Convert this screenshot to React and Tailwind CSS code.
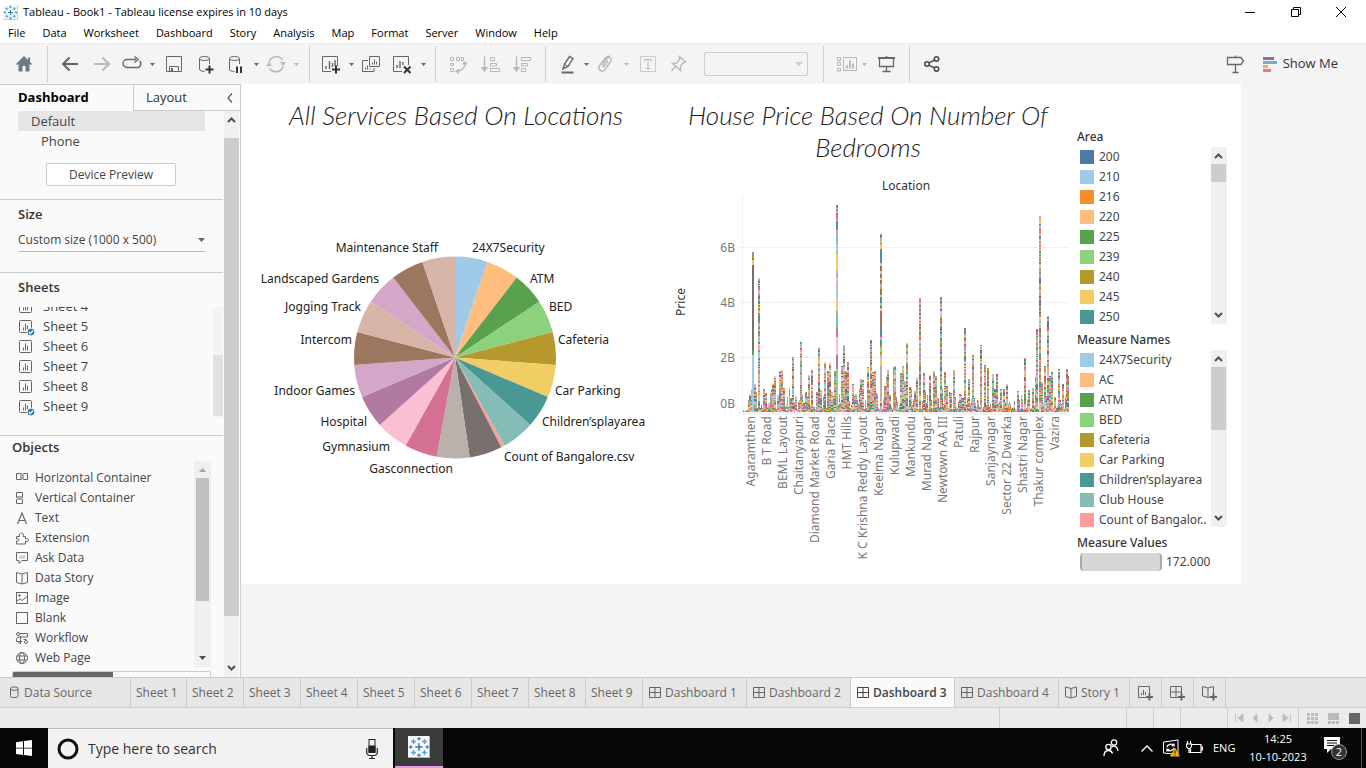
import React from "react";

const PALETTE = [
  "#4e79a7", "#a0cbe8", "#f28e2b", "#ffbe7d", "#59a14f", "#8cd17d", "#b6992d", "#f1ce63", "#499894", "#86bcb6",
  "#e15759", "#ff9d9a", "#79706e", "#bab0ac", "#d37295", "#fabfd2", "#b07aa1", "#d4a6c8", "#9d7660", "#d7b5a6",
];

/* ---------- icons ---------- */

function Ic({ children, size = 24, className = "text-[#666]", sw = 1 }) {
  return (
    <svg width={size} height={size} viewBox={`0 0 ${size} ${size}`} fill="none" stroke="currentColor" strokeWidth={sw} className={`shrink-0 ${className}`} aria-hidden="true">
      {children}
    </svg>
  );
}

function TableauMark({ size = 16, className = "" }) {
  const cross = (x, y, r, w, c) => <path key={`${x}-${y}`} d={`M${x - r} ${y}h${2 * r}M${x} ${y - r}v${2 * r}`} stroke={c} strokeWidth={w} />;
  return (
    <svg width={size} height={size} viewBox="0 0 24 24" fill="none" className={`shrink-0 ${className}`} aria-hidden="true">
      <rect x="0" y="0" width="24" height="24" fill="#f7f7f7" />
      <path d="M23.5 0v23.5H0" stroke="#aaa" />
      {cross(12, 12, 4, 1.6, "#2b7bab")}
      {cross(12, 3, 2, 1.4, "#3f8fc0")}
      {cross(12, 21, 2, 1.4, "#3f8fc0")}
      {cross(3, 12, 2, 1.4, "#3f8fc0")}
      {cross(21, 12, 2, 1.4, "#3f8fc0")}
      {cross(6, 6, 2.6, 1.5, "#5b9fca")}
      {cross(18, 6, 2.6, 1.5, "#5b9fca")}
      {cross(6, 18, 2.6, 1.5, "#5b9fca")}
      {cross(18, 18, 2.6, 1.5, "#5b9fca")}
    </svg>
  );
}

const Caret = ({ faint }) => (
  <svg width="5" height="3" viewBox="0 0 5 3" className={faint ? "text-[#b8b8b8]" : "text-[#666]"} aria-hidden="true">
    <path d="M0 0h5L2.5 3z" fill="currentColor" />
  </svg>
);

function Tool({ label, w = "w-8", faint, children }) {
  return (
    <button aria-label={label} className={`flex h-8 shrink-0 items-center justify-center ${w}`}>
      <Ic className={faint ? "text-[#b8b8b8]" : "text-[#666]"}>{children}</Ic>
    </button>
  );
}
function More({ label, faint }) {
  return (
    <button aria-label={label} className="flex h-8 w-3 shrink-0 items-center justify-center">
      <Caret faint={faint} />
    </button>
  );
}
const Divider = ({ className = "" }) => <div className={`h-9 w-px shrink-0 bg-[#ccc] ${className}`} />;

/* ---------- toolbar ---------- */

function Toolbar() {
  return (
    <div className="flex h-[41px] shrink-0 items-center border-t border-[#ececec] bg-[#f4f4f4]">
      <Tool label="Home" w="w-[47px]">
        <path d="M12 4L3.5 12.5H6.5V19.5H10.5V14H13.5V19.5H17.5V12.5H20.5L18 10V5.500H16V8Z" fill="#6d7887" stroke="none" />
      </Tool>
      <Divider className="mr-1.5" />
      <Tool label="Undo"><path d="M20 12H5M11.500 5.500L5 12l6.500 6.500" strokeWidth="2" /></Tool>
      <Tool label="Redo" faint><path d="M4 12H19M12.500 5.500L19 12l-6.500 6.500" strokeWidth="2" /></Tool>
      <Tool label="Revert" w="w-7"><path d="M16 7.500H7a3.700 3.700 0 0 0 0 8h10a3.700 3.700 0 0 0 2.500-6.500M14.500 4.500L18 7.500l-3.500 3" strokeWidth="1.4" /></Tool>
      <More label="Revert options" />
      <Tool label="Save"><path d="M4.500 4.500h15v15h-15zM7.500 19.500v-5h9v5" /><path d="M9 16h2v3H9z" fill="currentColor" stroke="none" /></Tool>
      <Tool label="New data source">
        <ellipse cx="10.500" cy="6.500" rx="5" ry="2" /><path d="M5.500 6.500V17c0 1.500 2 2.500 5 2.500M15.500 6.500V12" />
        <path d="M11.500 17.500h8M15.500 13.500v8" stroke="#333" strokeWidth="2" />
      </Tool>
      <Tool label="Pause auto updates" w="w-7">
        <ellipse cx="10.500" cy="6.500" rx="5" ry="2" /><path d="M5.500 6.500V17c0 1.500 2 2.500 5 2.500M15.500 6.500V12" />
        <path d="M13 14.500v6.500M17 14.500v6.500" stroke="#333" strokeWidth="2" />
      </Tool>
      <More label="Auto update options" />
      <Tool label="Run update" w="w-7" faint>
        <path d="M5 10a7.500 7.500 0 0 1 13.500-2M19 14a7.500 7.500 0 0 1-13.500 2.500" strokeWidth="1.5" />
        <path d="M16 10h6l-3 4zM2 14l3-4 3 4z" fill="currentColor" stroke="none" />
      </Tool>
      <More label="Run options" faint />
      <Divider className="ml-[7px] mr-[5px]" />
      <Tool label="New worksheet" w="w-[30px]">
        <path d="M13 19.500H4.500v-15h15V14" /><path d="M8 17v-3M11.500 17V9M14.500 15v-4M17 14V8" strokeWidth="1.400" />
        <path d="M14 17.500h8M18 13.500v8" stroke="#333" strokeWidth="2" />
      </Tool>
      <More label="New options" />
      <Tool label="Duplicate" w="w-7">
        <path d="M10.500 4.500h10v10h-10zM9 8.500H3.500v11H15V16" /><path d="M13.500 12.500v-2M15.500 12.500v-5M17.500 12.500v-3M6.500 17.500v-2M8.500 17.500v-4M11 17.500v-1" />
      </Tool>
      <Tool label="Clear">
        <path d="M13 19.500H4.500v-15h15V13" /><path d="M8 16v-3M11 16V9M14 13v-3" strokeWidth="1.400" />
        <path d="M15 14.500l6.500 6.500M21.500 14.500L15 21" stroke="#333" strokeWidth="2" />
      </Tool>
      <More label="Clear options" />
      <Divider className="ml-1.5 mr-[6px]" />
      <Tool label="Swap rows and columns" faint>
        <path d="M4.500 5.500h3v3h-3zM10.500 5.500h3v3h-3zM15.500 5.500h2v3h-2zM4.500 11.500h3v2h-3zM4.500 16.500h3v3h-3z" />
        <path d="M19 11c0 5-3 7.500-8 8.500M16.500 12.500L19 10l2 2.500M13 17l-3 2.500 3 2" strokeWidth="1.400" />
      </Tool>
      <Tool label="Sort ascending" faint><path d="M6.500 4.500v14" strokeWidth="1.400" /><path d="M3.500 15.500h6l-3 4z" fill="currentColor" /><path d="M12.500 5.500h4v3h-4zM12.500 11.500h6v2.500h-6zM12.500 16.500h9v3h-9z" /></Tool>
      <Tool label="Sort descending" faint><path d="M6.500 4.500v14" strokeWidth="1.400" /><path d="M3.500 15.500h6l-3 4z" fill="currentColor" /><path d="M11.500 5.500h9v3h-9zM11.500 11.500h6v2.500h-6zM11.500 16.500h4v3h-4z" /></Tool>
      <Divider className="ml-[7px] mr-[10px]" />
      <Tool label="Highlight" w="w-6">
        <path d="M7 17l1.500-5L13.500 4.500l3.500 2-5 8z" strokeWidth="1.400" /><path d="M9 12.500l3 2" /><path d="M5.500 20.500h12" strokeWidth="2" />
      </Tool>
      <More label="Highlight options" />
      <Tool label="Group members" w="w-7" faint>
        <path d="M8 13.500l5-7a2.300 2.300 0 0 1 4 2.500l-6.500 9a3.300 3.300 0 0 1-5.300-3.800L11 6.500c1.500-2 3-3 5-2M14 8.500l-5 7" strokeWidth="1.400" />
      </Tool>
      <More label="Group options" faint />
      <Tool label="Show mark labels" faint>
        <rect x="4.500" y="4.500" width="15" height="15" strokeDasharray="2 1" /><path d="M8.500 9.500v-2h7v2M12 7.500v9M10 16.500h4" />
      </Tool>
      <Tool label="Fix axes" w="w-7" faint>
        <path d="M13.500 4.500l6 5.500-2 .5-3 3.500v4.500L6.500 11.500l4-.500 3-3.500z M9.500 14.500L5.500 19" strokeWidth="1.400" />
      </Tool>
      <label className="relative ml-3 block">
        <span className="sr-only">Fit</span>
        <select disabled className="block h-6 w-[104px] appearance-none rounded-xs border border-[#ccc] bg-transparent text-[12px]" />
        <svg width="8" height="4" viewBox="0 0 8 4" className="absolute right-[5px] top-2.5" aria-hidden="true"><path d="M0 0h8L4 4z" fill="#ccc" /></svg>
      </label>
      <Divider className="ml-[15px] mr-[10px]" />
      <Tool label="Show cards" w="w-6" faint>
        <path d="M3.500 5.500h3v3h-3zM3.500 10.500h3v3h-3zM3.500 16.500h3v2.500h-3zM9.500 5.500h13v13h-13z" /><path d="M13 16.500v-3M16 16.500v-8M19 16.500v-5" strokeWidth="2" />
      </Tool>
      <More label="Card options" faint />
      <Tool label="Presentation mode">
        <path d="M4 6h17" strokeWidth="2" /><path d="M5.500 6.500v8h14v-8M12.500 14.500v5M12.500 4v1" strokeWidth="1.300" /><path d="M8.500 19.500h8" strokeWidth="1.500" />
      </Tool>
      <Divider className="ml-[7px] mr-1.5" />
      <button aria-label="Share" className="flex h-8 w-8 items-center justify-center">
        <Ic className="text-[#444]" sw="1.500"><circle cx="7" cy="12" r="2.200" /><circle cx="16.500" cy="7" r="2.200" /><circle cx="16.500" cy="17" r="2.200" /><path d="M9.200 10.800l5-2.600M9.200 13.200l5 2.600" /></Ic>
      </button>
      <div className="flex-1" />
      <Tool label="Data guide">
        <path d="M4.500 5.500h13.500l2.500 3.500-2.500 3.500H4.500zM12.500 3.500v2M12.500 12.500v8M9.500 20.500h6" strokeWidth="1.300" />
      </Tool>
      <button className="ml-3 mr-7 flex items-center gap-1.5 text-[13px] text-[#333]">
        <svg width="14" height="15" viewBox="0 0 14 15" aria-hidden="true">
          <path d="M0 0h11v3H0z" fill="#8a6f9a" /><path d="M0 4h14v3H0z" fill="#83a8cd" /><path d="M0 8h5v3H0z" fill="#f3a77c" /><path d="M0 12h8v3H0z" fill="#fb7180" />
        </svg>
        Show Me
      </button>
    </div>
  );
}

/* ---------- side panel ---------- */

const Chevron = ({ d }) => (
  <svg width="9" height="6" viewBox="0 0 9 6" fill="none" aria-hidden="true">
    <path d={d === "up" ? "M1 5l3.500-3.500L8 5" : "M1 1l3.500 3.500L8 1"} stroke="#505050" strokeWidth="2" />
  </svg>
);

function SheetIcon({ used }) {
  return (
    <svg width="17" height="17" viewBox="0 0 17 17" fill="none" stroke="#666" className="shrink-0" aria-hidden="true">
      <rect x="1.500" y="1.500" width="12" height="12" rx="1" />
      <path d="M5.500 11.500v-3M7.500 11.500v-7M9.500 11.500v-5" />
      {used && (<><circle cx="13" cy="13" r="4" fill="#2d7f9f" stroke="#fafafa" /><path d="M11 13l1.500 1.500 2.500-3" stroke="#fff" strokeWidth="1.200" /></>)}
    </svg>
  );
}

const SHEETS = [["Sheet 4"], ["Sheet 5", true], ["Sheet 6"], ["Sheet 7"], ["Sheet 8"], ["Sheet 9", true]];

const OBJECTS = [
  ["Horizontal Container", <><path d="M1.500 2.500h5v6h-5zM8.500 2.500h4v6h-4z" /><path d="M5 3h4v5H5z" fill="#aaa" stroke="none" /></>],
  ["Vertical Container", <><path d="M1.500 1.500h6v5h-6zM1.500 8.500h6v4h-6z" /><path d="M2 5h5v4H2z" fill="#aaa" stroke="none" /></>],
  ["Text", <path d="M2.500 13L7 2l4.500 11M4 9.500h6" strokeWidth="1.200" />],
  ["Extension", <path d="M1.500 5.500h3c-1-2 .5-3.500 2-3.500S9 3.500 8 5.500h2.500V8c2-1 3 0 3 1s-1 2-3 1v3h-9v-3c2 .5 2.500-.5 2.500-1.200S3 7.500 1.500 8z" />],
  ["Ask Data", <><path d="M1.500 1.500h11v8H7l-3 3v-3H1.500z" /><path d="M5 7.500v-2M7 7.500v-3M9 7.500v-3" stroke="#999" /></>],
  ["Data Story", <path d="M7 3L1.500 1.500v10L7 13l5.500-1.500v-10zM7 3v10" />],
  ["Image", <><rect x="1.500" y="1.500" width="11" height="11" /><path d="M2 10l3-2 2 1.500 5-4" /><circle cx="4.500" cy="4.500" r=".8" fill="#666" /></>],
  ["Blank", <rect x="1.500" y="1.500" width="11" height="11" />],
  ["Workflow", <><circle cx="3" cy="3" r="1.500" /><path d="M4.500 2.500h8v3.500H3L1.500 8v2.500H7M5.500 5v8M3.500 11l2 2M11.500 8.500h-3" /><circle cx="11" cy="11" r="1.500" /></>],
  ["Web Page", <><circle cx="7" cy="7" r="5.500" /><ellipse cx="7" cy="7" rx="2.500" ry="5.500" /><path d="M2 5h10M2 9h10" /></>],
];

function SidePanel() {
  return (
    <aside className="flex w-[241px] shrink-0 flex-col border-r border-t border-[#ccc] bg-[#fafafa] text-[#444]">
      <div className="flex h-[26px] shrink-0 items-stretch text-[13px]">
        <button className="w-[133px] pl-[18px] text-left font-bold text-black">Dashboard</button>
        <button className="flex-1 border-b border-l border-[#ccc] pl-3 text-left text-[#333]">Layout</button>
        <button aria-label="Collapse pane" className="flex w-5 items-center justify-center border-b border-[#ccc]">
          <svg width="6" height="10" viewBox="0 0 6 10" fill="none" aria-hidden="true"><path d="M5 .500L1 5l4 4.500" stroke="#555" strokeWidth="1.200" /></svg>
        </button>
      </div>
      <div className="flex min-h-0 flex-1">
        <div className="flex min-w-0 flex-1 flex-col overflow-hidden">
          <section className="h-[89px] shrink-0 border-b border-[#ccc] px-[18px] text-[13px]">
            <button className="block h-5 w-full bg-[#e6e6e6] pl-[13px] text-left leading-5">Default</button>
            <button className="block h-5 w-full pl-[23px] text-left leading-5">Phone</button>
            <button className="ml-7 mt-3 block h-[23px] w-[130px] rounded-xs border border-[#ccc] bg-white text-[12px]">Device Preview</button>
          </section>
          <section className="h-[73px] shrink-0 border-b border-[#ccc] px-[18px] pt-1">
            <h2 className="text-[13px] font-semibold leading-5 text-[#333]">Size</h2>
            <label className="relative mt-1 block">
              <span className="sr-only">Dashboard size</span>
              <select className="block h-6 w-full appearance-none border-b border-[#bbb] bg-transparent text-[12px] outline-none">
                <option>Custom size (1000 x 500)</option>
              </select>
              <svg width="7" height="4" viewBox="0 0 7 4" className="absolute right-0 top-2.5" aria-hidden="true"><path d="M0 0h7L3.500 4z" fill="#666" /></svg>
            </label>
          </section>
          <section className="h-[163px] shrink-0 border-b border-[#ccc] pt-1">
            <h2 className="pl-[18px] text-[13px] font-semibold leading-5 text-[#333]">Sheets</h2>
            <div className="mt-2.5 flex h-[110px]">
              <ul className="flex flex-1 flex-col justify-end overflow-hidden pl-[18px] text-[13px]">
                {SHEETS.map(([name, used]) => (
                  <li key={name} className="flex h-5 shrink-0 items-center gap-2"><SheetIcon used={used} />{name}</li>
                ))}
              </ul>
              <div className="w-2.5 bg-[#f3f3f3] pt-12"><div className="h-[61px] bg-[#e1e1e1]" /></div>
            </div>
          </section>
          <section className="flex min-h-0 flex-1 flex-col px-3 pt-px">
            <h2 className="text-[13px] font-semibold leading-5 text-[#333]">Objects</h2>
            <div className="mt-1 flex h-[206px] shrink-0">
              <ul className="flex-1 pl-[3px] pt-[7px] text-[12px]">
                {OBJECTS.map(([name, icon]) => (
                  <li key={name} className="flex h-5 items-center gap-1.5">
                    <svg width="14" height="14" viewBox="0 0 14 14" fill="none" stroke="#666" className="shrink-0" aria-hidden="true">{icon}</svg>
                    {name}
                  </li>
                ))}
              </ul>
              <div className="flex w-[17px] flex-col items-center justify-between bg-[#f0f0f0] py-[7px]">
                <svg width="7" height="4" viewBox="0 0 7 4" aria-hidden="true"><path d="M0 4h7L3.500 0z" fill="#a3a3a3" /></svg>
                <div className="mb-auto mt-1.5 h-[123px] w-[13px] bg-[#c1c1c1]" />
                <svg width="7" height="4" viewBox="0 0 7 4" aria-hidden="true"><path d="M0 0h7L3.500 4z" fill="#505050" /></svg>
              </div>
            </div>
            <div className="mt-1 flex min-h-0 flex-1 overflow-hidden rounded-t-xs border border-b-0 border-[#ccc]">
              <div className="w-[100px] bg-[#666]" />
            </div>
          </section>
        </div>
        <div className="ml-px mr-px flex w-[15px] shrink-0 flex-col items-center bg-[#f0f0f0] pt-1.5">
          <Chevron d="up" />
          <div className="mt-[15px] h-[478px] w-[15px] bg-[#cdcdcd]" />
          <div className="mb-1.5 mt-auto"><Chevron d="down" /></div>
        </div>
      </div>
    </aside>
  );
}

/* ---------- pie chart ---------- */

const SLICES = [1, 3, 4, 5, 6, 7, 8, 9, 11, 12, 13, 14, 15, 16, 17, 18, 19, 17, 18, 19];
const PIE_LABELS = [
  ["24X7Security", 472, 252], ["ATM", 530, 283], ["BED", 549, 311], ["Cafeteria", 558, 344], ["Car Parking", 555, 395],
  ["Children’splayarea", 542, 426], ["Count of Bangalore.csv", 504, 461],
  ["Gasconnection", 453, 473, 1], ["Gymnasium", 390, 451, 1], ["Hospital", 367, 426, 1], ["Indoor Games", 355, 395, 1],
  ["Intercom", 352, 344, 1], ["Jogging Track", 361, 311, 1], ["Landscaped Gardens", 379, 283, 1], ["Maintenance Staff", 438, 252, 1],
];

function PieChart() {
  const cx = 455, cy = 357.5, r = 101;
  const pt = (a) => `${(cx + r * Math.sin(a)).toFixed(2)} ${(cy - r * Math.cos(a)).toFixed(2)}`;
  let angle = 0;
  return (
    <svg width="430" height="453" viewBox="241 131 430 453" role="img" aria-label="All Services Based On Locations">
      {SLICES.map((c, i) => {
        const a0 = angle;
        angle += ((i === 8 ? 2.04 : 18.84) * Math.PI) / 180;
        return <path key={i} d={`M${cx} ${cy}L${pt(a0)}A${r} ${r} 0 0 1 ${pt(angle)}Z`} fill={PALETTE[c]} />;
      })}
      <g fontSize="12" fill="#222">
        {PIE_LABELS.map(([t, x, y, end]) => <text key={t} x={x} y={y} textAnchor={end ? "end" : "start"}>{t}</text>)}
      </g>
    </svg>
  );
}

/* ---------- bar chart ---------- */

// [left, height] of every tall bar, in plot pixels
const TALL = [
  [752, 160], [758, 134], [749, 18], [754, 28], [763, 23], [765, 19], [768, 9], [772, 28], [774, 36], [777, 17], [779, 41], [781, 42], [783, 24],
  [786, 8], [790, 14], [792, 55], [795, 15], [800, 70], [803, 9], [806, 15], [808, 37], [811, 42], [816, 20], [818, 64], [820, 22], [824, 50],
  [827, 41], [829, 49], [831, 20], [834, 41], [836, 207], [839, 10], [841, 46], [843, 67], [845, 41], [847, 50], [852, 28], [855, 18],
  [859, 24], [860, 33], [862, 32], [867, 45], [870, 72], [872, 40], [874, 41], [876, 18], [880, 178], [884, 26], [886, 35], [887, 42],
  [889, 17], [893, 45], [894, 46], [900, 39], [902, 46], [904, 31], [906, 69], [909, 25], [914, 21], [916, 35], [919, 114], [923, 39],
  [929, 37], [933, 41], [935, 36], [940, 115], [944, 40], [946, 26], [950, 19], [953, 42], [959, 18], [962, 14], [964, 84], [968, 33],
  [972, 57], [974, 9], [980, 67], [984, 47], [987, 44], [992, 38], [994, 23], [996, 38], [1000, 23], [1003, 23], [1006, 28], [1017, 21],
  [1021, 7], [1024, 54], [1028, 22], [1032, 24], [1035, 35], [1036, 83], [1039, 196], [1041, 30], [1044, 46], [1047, 96], [1049, 36],
  [1051, 40], [1054, 15], [1058, 43], [1062, 28], [1066, 43], [1067, 36],
];
// Bars whose large segments are visible: [colour, height] from the bottom up
const BIG = {
  752: [[1, 57], [4, 5], [12, 85], [7, 2], [3, 2]],
  836: [[5, 8], [13, 6], [5, 29], [16, 14], [15, 18], [14, 10], [9, 16], [7, 4], [3, 9], [1, 9], [19, 8], [15, 3], [13, 7], [7, 17], [5, 3], [1, 7], [9, 9], [13, 4], [3, 1], [8, 9], [3, 1], [14, 5], [10, 2]],
  880: [[13, 6], [18, 3], [3, 2], [13, 36], [7, 6], [1, 4], [6, 3], [5, 4], [2, 2], [8, 6], [17, 3], [10, 2], [8, 8], [18, 16], [3, 3], [0, 2], [5, 3], [8, 6], [3, 2], [18, 6], [2, 2], [13, 3], [18, 4], [3, 2], [18, 4], [1, 3], [18, 5], [3, 3], [8, 14]],
};

function buildBars() {
  let seed = 17;
  const rnd = () => {
    seed = (seed * 1103515245 + 12345) % 2147483648;
    return seed / 2147483648;
  };
  const rects = [];
  const stack = (x, h, w) => {
    let used = 0;
    for (const [c, n] of BIG[x] || []) {
      rects.push([x, 412 - used - n, w, n, c]);
      used += n;
    }
    while (used < h) {
      const n = Math.min(h - used, rnd() < 0.72 ? 1 : 2);
      rects.push([x, 412 - used - n, w, n, Math.floor(rnd() * 20)]);
      used += n;
    }
  };
  for (let x = 743; x < 1069; x += 1) {
    stack(x, x < 748 ? 1 + Math.floor(rnd() * 2) : 3 + Math.floor(rnd() * rnd() * 26), 1);
  }
  for (const [x, h] of TALL) stack(x, h, 2);
  return rects;
}
const BARS = buildBars();

const LOCATIONS = [
  "Agaramthen", "B T Road", "BEML Layout", "Chaitanyapuri", "Diamond Market Road", "Garia Place", "HMT Hills", "K C Krishna Reddy Layout",
  "Keelma Nagar", "Kulupwadi", "Mankundu", "Murad Nagar", "Newtown AA III", "Patuli", "Rajpur", "Sanjaynagar", "Sector 22 Dwarka",
  "Shastri Nagar", "Thakur complex", "Vazira",
];

function BarChart() {
  return (
    <svg width="398" height="421" viewBox="671 163 398 421" role="img" aria-label="House Price Based On Number Of Bedrooms">
      <path d="M738 247.500h331M738 302.500h331M738 357.500h331M738 412.500h331M742.500 195v217" stroke="#f0f0f0" />
      <rect x="742" y="412" width="327" height="3" fill="#f3f3f3" />
      <g shapeRendering="crispEdges">
        {BARS.map(([x, y, w, h, c], i) => <rect key={i} x={x} y={y} width={w} height={h} fill={PALETTE[c]} />)}
      </g>
      <g fontSize="12">
        <text x="906" y="190" textAnchor="middle" fill="#333">Location</text>
        <text transform="translate(685 302) rotate(-90)" textAnchor="middle" fill="#333">Price</text>
        <g fill="#787878" textAnchor="end">
          <text x="735" y="252">6B</text><text x="735" y="307">4B</text><text x="735" y="362">2B</text><text x="735" y="408">0B</text>
          {LOCATIONS.map((t, i) => <text key={t} transform={`translate(${755 + 16 * i} 416) rotate(-90)`}>{t}</text>)}
        </g>
      </g>
    </svg>
  );
}

/* ---------- legends ---------- */

const AREAS = ["200", "210", "216", "220", "225", "239", "240", "245", "250"];
const MEASURES = [["24X7Security", 1], ["AC", 3], ["ATM", 4], ["BED", 5], ["Cafeteria", 6], ["Car Parking", 7], ["Children’splayarea", 8], ["Club House", 9], ["Count of Bangalor..", 11]];
const SWATCH = ["bg-[#4e79a7]", "bg-[#a0cbe8]", "bg-[#f28e2b]", "bg-[#ffbe7d]", "bg-[#59a14f]", "bg-[#8cd17d]", "bg-[#b6992d]", "bg-[#f1ce63]", "bg-[#499894]", "bg-[#86bcb6]", "bg-[#e15759]", "bg-[#ff9d9a]"];

function Legend({ title, items, thumb }) {
  return (
    <section>
      <h3 className="h-[19px] font-medium leading-[18px] text-[#333]">{title}</h3>
      <div className="mb-[7px] flex h-[177px]">
        <ul className="flex-1 overflow-hidden pl-[3px]">
          {items.map(([name, c]) => (
            <li key={name} className="flex h-5 items-center gap-[5px] whitespace-nowrap text-[#444]">
              <span className={`size-3.5 shrink-0 ${SWATCH[c]}`} />{name}
            </li>
          ))}
        </ul>
        <div className="flex w-4 flex-col items-center bg-[#f0f0f0] pr-px pt-1.5">
          <Chevron d="up" />
          <div className={`mt-[5px] w-[15px] bg-[#cdcdcd] ${thumb}`} />
          <div className="mb-1.5 mt-auto"><Chevron d="down" /></div>
        </div>
      </div>
    </section>
  );
}

function Dashboard() {
  return (
    <main className="min-w-0 flex-1 overflow-hidden bg-[#f4f4f4]">
      <div className="flex h-[500px] w-[1000px] bg-white font-['Noto_Sans',sans-serif] text-[12px]">
        <section className="w-[430px] shrink-0 pt-[15px]">
          <h2 className="text-center font-['Lato',cursive] text-[26px] font-light italic leading-8 text-[#222]">All Services Based On Locations</h2>
          <PieChart />
        </section>
        <section className="w-[398px] shrink-0 pt-[15px]">
          <h2 className="pr-1 text-center font-['Lato',cursive] text-[26px] font-light italic leading-8 text-[#222]">House Price Based On Number Of<br />Bedrooms</h2>
          <BarChart />
        </section>
        <aside className="flex-1 pl-2 pr-3.5 pt-11">
          <Legend title="Area" items={AREAS.map((a, i) => [a, i])} thumb="h-[18px]" />
          <Legend title="Measure Names" items={MEASURES} thumb="h-[63px]" />
          <h3 className="h-[19px] font-medium leading-[18px] text-[#333]">Measure Values</h3>
          <div className="flex h-[18px] items-center gap-1 pl-[3px] text-[#444]">
            <div className="h-[18px] w-[82px] rounded-[4px] border-x-2 border-[#aaa] bg-[#d6d6d6]" />172.000
          </div>
        </aside>
      </div>
    </main>
  );
}

/* ---------- bottom tabs and status ---------- */

const GridIcon = ({ active }) => (
  <svg width="12" height="13" viewBox="0 0 12 13" fill="none" stroke={active ? "#444" : "#666"} className="shrink-0" aria-hidden="true"><path d="M.500 1.500h11v10H.500zM6 1.500v10M.500 6.500h11" /></svg>
);
const BookIcon = () => (
  <svg width="12" height="13" viewBox="0 0 12 13" fill="none" stroke="#666" className="shrink-0" aria-hidden="true"><path d="M6 2.500L.500 1v9.500L6 12l5.500-1.500V1zM6 2.500V12" /></svg>
);
const TAB = "flex h-full shrink-0 items-center gap-1 border-r border-[#ccc] whitespace-nowrap";

function SheetTabs() {
  return (
    <nav className="flex h-[31px] shrink-0 items-center border-y border-[#ccc] bg-[#e6e6e6] text-[12px] text-[#666]">
      <button className={`${TAB} w-[131px] pl-2.5`}>
        <svg width="9" height="13" viewBox="0 0 9 13" fill="none" stroke="#666" className="mr-px" aria-hidden="true"><rect x=".5" y="1" width="7.500" height="10.500" rx="2" /><path d="M.500 3.500q3.700 2 7.500 0" /></svg>
        Data Source
      </button>
      {[1, 2, 3, 4, 5, 6, 7, 8, 9].map((n) => <button key={n} className={`${TAB} pl-[5px] ${n === 1 ? "w-14" : "w-[57px]"}`}>Sheet {n}</button>)}
      {[1, 2, 3, 4].map((n) => (
        <button key={n} className={`${TAB} w-[104px] pl-1.5 ${n === 3 ? "bg-[#fafafa] font-semibold text-[#444]" : ""}`}>
          <GridIcon active={n === 3} />Dashboard {n}
        </button>
      ))}
      <button className={`${TAB} w-[71px] pl-1.5`}><BookIcon />Story 1</button>
      <button aria-label="New worksheet" className={`${TAB} w-8 justify-center`}>
        <Ic size={16}><path d="M9 12.500H.500v-11h11V9M3.500 10V8M5.500 10V5M7.500 10V7" /><path d="M8 12h7M11.500 8.500v7" strokeWidth="2" /></Ic>
      </button>
      <button aria-label="New dashboard" className={`${TAB} w-8 justify-center`}>
        <Ic size={16}><path d="M9 12.500H.500v-11h11V9M6 1.500v11M.500 7h11" /><path d="M8 12h7M11.500 8.500v7" strokeWidth="2" /></Ic>
      </button>
      <button aria-label="New story" className={`${TAB} w-8 justify-center`}>
        <Ic size={16}><path d="M6 3L.500 1.500v9.500L6 12.500l2-.500M11.500 9V1.500L6 3v9" /><path d="M8 12h7M11.500 8.500v7" strokeWidth="2" /></Ic>
      </button>
    </nav>
  );
}

function StatusBar() {
  const cell = "h-full shrink-0 border-l border-[#ccc]";
  return (
    <div className="flex h-5 shrink-0 items-center justify-end bg-[#ebebeb]">
      <div className={`${cell} w-[127px]`} />
      <div className={`${cell} w-[27px]`} />
      <div className={`${cell} w-[27px]`} />
      <div className={`${cell} w-[47px]`} />
      <div className={`${cell} flex w-[71px] items-center justify-center gap-1.5`}>
        {["M1.500 1v8M9 1L4 5l5 4z", "M7 1L3 5l4 4z", "M3 1l4 4-4 4z", "M8.500 1v8M1 1l5 4-5 4z"].map((d, i) => (
          <button key={d} aria-label={["First", "Previous", "Next", "Last"][i]}>
            <svg width="10" height="10" viewBox="0 0 10 10" aria-hidden="true"><path d={d} fill="#bbb" stroke="#bbb" strokeWidth=".8" /></svg>
          </button>
        ))}
      </div>
      <div className={`${cell} flex w-[68px] items-center justify-end gap-2.5 pr-1.5`}>
        <svg width="11" height="11" viewBox="0 0 11 11" fill="#bbb" aria-hidden="true"><path d="M0 0h3v3H0zM4 0h3v3H4zM8 0h3v3H8zM0 4h3v3H0zM4 4h3v3H4zM8 4h3v3H8zM0 8h3v3H0zM4 8h3v3H4zM8 8h3v3H8z" /></svg>
        <svg width="11" height="11" viewBox="0 0 11 11" fill="#bbb" aria-hidden="true"><path d="M0 0h11v7H0zM0 8h3v3H0zM4 8h3v3H4zM8 8h3v3H8z" /></svg>
        <svg width="11" height="11" viewBox="0 0 11 11" aria-hidden="true"><path d="M0 0h11v11H0z" fill="#666" /></svg>
      </div>
    </div>
  );
}

/* ---------- taskbar ---------- */

function Taskbar() {
  return (
    <footer className="flex h-10 shrink-0 items-stretch bg-[#060606] text-white">
      <button aria-label="Start" className="flex w-12 items-center justify-center">
        <svg width="16" height="16" viewBox="0 0 16 16" fill="#fff" aria-hidden="true"><path d="M0 2.200l7-1v6.500H0zM8 1.100L16 0v7.700H8zM0 8.500h7v6.400l-7-1zM8 8.500h8V16l-8-1.100z" /></svg>
      </button>
      <div className="flex w-[345px] items-center border-t border-[#bbb] bg-[#f2f2f2] pl-[9px] pr-[15px] text-[#2b2b2b]">
        <svg width="22" height="22" viewBox="0 0 22 22" fill="none" aria-hidden="true"><circle cx="11" cy="11" r="9" stroke="#111" strokeWidth="3" /></svg>
        <label htmlFor="taskbar-search" className="sr-only">Search</label>
        <input id="taskbar-search" placeholder="Type here to search" className="ml-[9px] w-full min-w-0 flex-1 bg-transparent text-[14px] outline-none placeholder:text-[#333]" />
        <svg width="12" height="20" viewBox="0 0 12 20" fill="none" stroke="#222" aria-hidden="true"><rect x="3" y=".5" width="6" height="13" /><path d="M3 7h6v6.500H3z" fill="#222" /><path d="M.700 9v4.500c0 1.500 1.500 3 3 3h4.600c1.500 0 3-1.500 3-3V9M6 16.500v3M3 19.500h6" strokeWidth="1.200" /></svg>
      </div>
      <button aria-label="Tableau" className="ml-0.5 flex w-12 items-center justify-center border-b-2 border-[#e59aea] bg-[#3b3b3b]">
        <TableauMark size={22} />
      </button>
      <div className="flex-1" />
      <div className="flex items-center text-[12px]">
        <svg width="16" height="18" viewBox="0 0 16 18" fill="none" stroke="#fff" strokeWidth="1.300" className="mr-[22px]" aria-hidden="true"><circle cx="5.500" cy="8" r="2.700" /><path d="M1 17c0-4 2-5.500 4.500-5.500 2 0 3.500 1 4 3" /><circle cx="11" cy="3.500" r="2.700" /><path d="M8.500 8c3-2 6-.5 6.500 4" /></svg>
        <svg width="12" height="7" viewBox="0 0 12 7" fill="none" stroke="#fff" strokeWidth="1.300" className="mr-[9px]" aria-hidden="true"><path d="M.5 6.500L6 1l5.500 5.500" /></svg>
        <svg width="18" height="18" viewBox="0 0 18 18" fill="none" stroke="#fff" className="mr-1.5" aria-hidden="true"><path d="M1.500 3L16 1v14.500L1.500 14z" /><path d="M5 8a4 3.500 0 0 1 7-1.500V4.500M12 6.500H9.500M12 9a4 3.500 0 0 1-7 1.500v2M5 10.500h2.500" strokeWidth="1.300" /><path d="M13 8.500l5 9H8z" fill="#f6b300" stroke="none" /><path d="M13 11.500v3M13 15.500v1" stroke="#222" strokeWidth="1.200" /></svg>
        <svg width="17" height="14" viewBox="0 0 17 14" fill="none" stroke="#fff" strokeWidth="1.200" className="mr-2.5" aria-hidden="true"><path d="M6 3.500h9v8H4.500V8M15 6h1.500v3H15M1.500 0v3M4.500 0v3M.500 3h5v2.500l-1.500 2H2L.500 5.500zM3 7.500v4h2" /></svg>
        <span className="w-6 text-[11px]">ENG</span>
        <div className="ml-2.5 w-[62px] text-center text-[11px] leading-[18px]">14:25<br />10-10-2023</div>
        <svg width="28" height="26" viewBox="0 0 28 26" className="ml-3.5 mr-2.5" aria-hidden="true">
          <path d="M1 2h16v12H8l-4 4v-4H1z" fill="#fff" /><path d="M4 5.500h10M4 8h10M4 10.500h7" stroke="#111" />
          <circle cx="16" cy="17" r="7.500" fill="#333" stroke="#999" /><text x="16" y="21" textAnchor="middle" fontSize="11" fill="#fff">2</text>
        </svg>
      </div>
      <div className="mr-1 w-px bg-[#555]" />
    </footer>
  );
}

export default function App() {
  return (
    <div className="flex h-screen flex-col overflow-hidden bg-[#f4f4f4] font-['Open_Sans','Noto_Sans',sans-serif]">
      <header className="flex h-6 shrink-0 items-center bg-white pl-[3px] text-[11px] text-black">
        <TableauMark size={15} />
        <h1 className="ml-[5px]">Tableau - Book1 - Tableau license expires in 10 days</h1>
        <div className="flex-1" />
        <button aria-label="Minimize" className="flex w-[46px] justify-center"><svg width="10" height="10" viewBox="0 0 10 10" aria-hidden="true"><path d="M0 5.500h10" stroke="#000" /></svg></button>
        <button aria-label="Restore" className="flex w-[45px] justify-center"><svg width="10" height="10" viewBox="0 0 10 10" fill="none" stroke="#000" aria-hidden="true"><path d="M.500 2.500h7v7h-7zM2.500 2.500v-2h7v7h-2" /></svg></button>
        <button aria-label="Close" className="mr-0.5 flex w-[46px] justify-center"><svg width="10" height="10" viewBox="0 0 10 10" aria-hidden="true"><path d="M0 0l10 10M10 0L0 10" stroke="#000" /></svg></button>
      </header>
      <nav className="flex h-[19px] shrink-0 items-center gap-[17px] bg-white pl-2 text-[11px] text-black">
        {["File", "Data", "Worksheet", "Dashboard", "Story", "Analysis", "Map", "Format", "Server", "Window", "Help"].map((m) => <button key={m}>{m}</button>)}
      </nav>
      <Toolbar />
      <div className="flex min-h-0 flex-1">
        <SidePanel />
        <Dashboard />
      </div>
      <SheetTabs />
      <StatusBar />
      <Taskbar />
    </div>
  );
}
